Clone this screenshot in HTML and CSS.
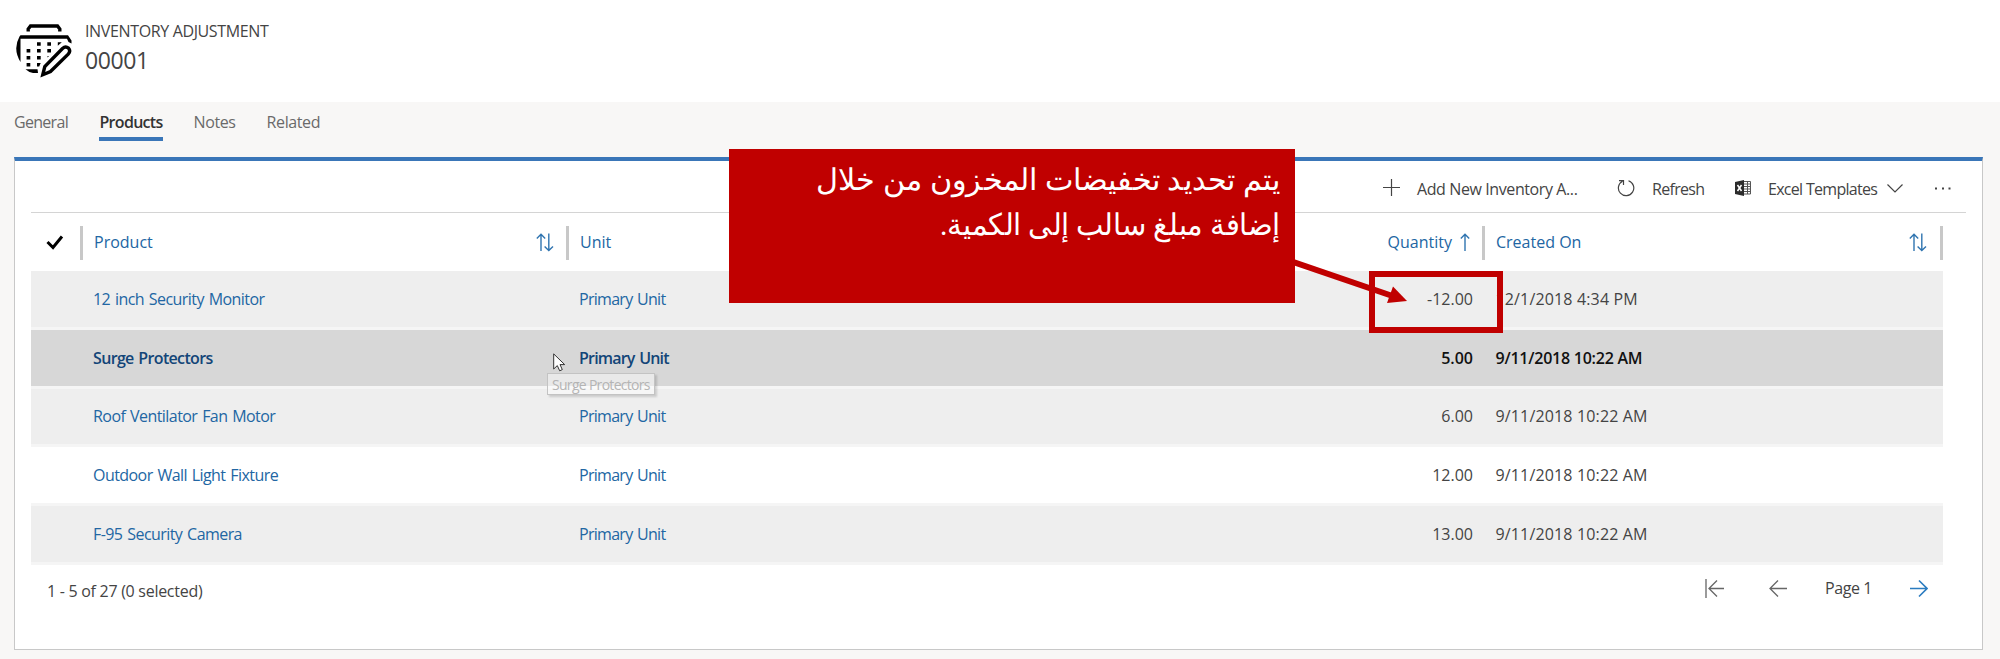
FILE: index.html
```
<!DOCTYPE html>
<html lang="en">
<head>
<meta charset="utf-8">
<title>Inventory Adjustment 00001</title>
<link rel="stylesheet" href="styles.css">
</head>
<body>
<header class="record-header">
  <svg class="record-icon" width="58" height="56" viewBox="0 0 58 56" fill="none">
    <path d="M13.200 9.500V7L15.500 4H42.500L44.800 7V9.500" stroke="#000" stroke-width="3.400"/>
    <path d="M5.500 13.200H53L56.500 18.500V21.500L53.500 20L52 16.800H5.500V40Q-2.500 27 4.500 14.500Z" fill="#000"/>
    <path d="M10.500 47.300H22.500L23 51H18Q14 50.500 10.500 47.300Z" fill="#000"/>
    <path d="M22 20.200h3.700v3.600h-3.700zM32.300 20.200h3.700v3.600h-3.700zM42.800 20.200h4l-4 3.600zM11.600 27h3.700v3.600h-3.700zM22 27h3.700v3.600h-3.700zM32.300 27h3.700v3.600h-3.700zM11.600 34h3.700v3.600h-3.700zM22 34h3.700v3.600h-3.700zM32.500 34h1.500l-1.500 1.500zM11.600 41h3.700v3.600h-3.700zM22 41h3.700l-1.500 3.600h-2.200z" fill="#000"/>
    <path d="M27.800 52.700L29.800 44.500L47.500 26.500Q50.500 23.800 53.500 26.200Q56 29 53.200 32.200L35.500 49.500Z" stroke="#000" stroke-width="3.400"/>
  </svg>
  <div class="record-titles">
    <div class="entity">INVENTORY ADJUSTMENT</div>
    <div class="record-name">00001</div>
  </div>
</header>
<nav class="tabs">
  <a class="tab t70">General</a>
  <a class="tab tab-active t70">Products</a>
  <a class="tab t40">Notes</a>
  <a class="tab t40">Related</a>
</nav>
<main class="card">
  <div class="commands">
    <div class="command add"><svg width="17" height="17" viewBox="0 0 17 17"><path d="M8.500 0V17M0 8.500H17" class="ink"/></svg><span class="label t40">Add New Inventory A...</span></div>
    <div class="command refresh"><svg width="18" height="18" viewBox="0 0 18 18"><path d="M5.500 2.200A7.700 7.700 0 1 0 11.500 1.700M2 1.600H6.500V6" class="ink"/></svg><span class="label t70">Refresh</span></div>
    <div class="command excel"><svg width="16" height="16" viewBox="0 0 16 16"><path d="M8 1.500H15.500V14H8M9 4H15M9 6.500H15M9 9H15M9 11.500H15M12.500 2V14" stroke="#555" stroke-width="1" fill="none"/><path d="M0 2L9 0V16L0 14Z" fill="#2b2b2b"/><path d="M2.500 5L6.500 11M6.500 5L2.500 11" stroke="#fff" stroke-width="1.500"/></svg><span class="label t70">Excel Templates</span><svg class="chevron" width="16" height="9" viewBox="0 0 16 9"><path d="M.5 .5L8 8L15.500 .5" class="ink"/></svg></div>
    <svg class="more" width="16" height="3" viewBox="0 0 16 3"><path d="M0 .5h2v2H0zM7 .5h2v2H7zM13.500 .5h2v2h-2z" fill="#444"/></svg>
  </div>
  <div class="grid">
    <div class="row head">
      <div class="select"><svg width="18" height="15" viewBox="0 0 18 15"><path d="M1.500 7L7 12.500L16 1.500" stroke="#000" stroke-width="3" fill="none"/></svg></div>
      <div class="cell"><span>Product</span><svg class="sort" width="18" height="19" viewBox="0 0 18 19"><path d="M5 18V1.500M.8 5.500L5 1.300L9.200 5.500M12.800 .5V17M8.600 13.500L12.800 17.500L17 13.500" class="sort-line"/></svg></div>
      <div class="cell"><span>Unit</span></div>
      <div class="cell quantity"><span>Quantity</span><svg class="asc" width="10" height="19" viewBox="0 0 10 19"><path d="M5 18V1.500M.8 5.500L5 1.300L9.200 5.500" class="sort-line"/></svg></div>
      <div class="cell last"><span>Created On</span><svg class="sort" width="18" height="19" viewBox="0 0 18 19"><path d="M5 18V1.500M.8 5.500L5 1.300L9.200 5.500M12.800 .5V17M8.600 13.500L12.800 17.500L17 13.500" class="sort-line"/></svg></div>
    </div>
    <div class="row shaded"><div class="select"></div><div class="cell link">12 inch Security Monitor</div><div class="cell link unit">Primary Unit</div><div class="cell quantity">-12.00</div><div class="cell date">12/1/2018 4:34 PM</div></div>
    <div class="row hovered"><div class="select"></div><div class="cell link">Surge Protectors</div><div class="cell link unit">Primary Unit</div><div class="cell quantity">5.00</div><div class="cell date">9/11/2018 10:22 AM</div></div>
    <div class="row shaded"><div class="select"></div><div class="cell link">Roof Ventilator Fan Motor</div><div class="cell link unit">Primary Unit</div><div class="cell quantity">6.00</div><div class="cell date">9/11/2018 10:22 AM</div></div>
    <div class="row"><div class="select"></div><div class="cell link">Outdoor Wall Light Fixture</div><div class="cell link unit">Primary Unit</div><div class="cell quantity">12.00</div><div class="cell date">9/11/2018 10:22 AM</div></div>
    <div class="row shaded"><div class="select"></div><div class="cell link">F-95 Security Camera</div><div class="cell link unit">Primary Unit</div><div class="cell quantity">13.00</div><div class="cell date">9/11/2018 10:22 AM</div></div>
  </div>
  <footer class="pager">
    <span class="count">1 - 5 of 27 (0 selected)</span>
    <svg class="first" width="19" height="19" viewBox="0 0 19 19"><path d="M1 0V19M19 9.500H4M12 1.500L4 9.500L12 17.500" class="nav-line"/></svg>
    <svg class="prev" width="18" height="19" viewBox="0 0 18 19"><path d="M18 9.500H1M9 1.500L1 9.500L9 17.500" class="nav-line"/></svg>
    <span class="page">Page 1</span>
    <svg class="next" width="18" height="19" viewBox="0 0 18 19"><path d="M0 9.500H17M9 1.500L17 9.500L9 17.500" class="nav-line active"/></svg>
  </footer>
</main>
<div class="tooltip">Surge Protectors</div>
<svg class="cursor" width="13" height="19" viewBox="0 0 13 19"><path d="M.7 .9V16L4.300 12.600L6.700 17.800L9.300 16.600L7 11.600H11.700Z" fill="#fff" stroke="#333"/></svg>
<div class="callout" dir="rtl" lang="ar"><div class="first-line">يتم تحديد تخفيضات المخزون من خلال</div><div class="second-line">إضافة مبلغ سالب إلى الكمية.</div></div>
<div class="highlight"></div>
<svg class="arrow" width="120" height="48" viewBox="0 0 120 48"><path d="M0 3.500L102 38.500" stroke="#c00000" stroke-width="6"/><path d="M101 28.500L115 43L95 45Z" fill="#c00000"/></svg>
</body>
</html>
```
FILE: styles.css
```
* { box-sizing: border-box; }
body { margin: 0; position: relative; width: 2000px; height: 659px; overflow: hidden; background: #f8f7f6; color: #444; font: 16px/22px "Open Sans", sans-serif; white-space: nowrap; }
svg { display: block; flex: none; }
.t40 { letter-spacing: -.4px; }
.t70 { letter-spacing: -.7px; }
.record-header { height: 102px; background: #fff; display: flex; padding: 22px 0 0 15px; gap: 12px; }
.entity { height: 19px; line-height: 19px; letter-spacing: -.36px; }
.record-name { margin-top: 4px; font-size: 23px; line-height: 30px; letter-spacing: -.4px; }
.tabs { display: flex; gap: 31.500px; height: 55px; padding: 9px 0 0 14px; color: #6a6a6a; }
.tab { display: block; height: 30px; }
.tab:nth-child(n+3) { margin-left: -.5px; }
.tab-active { color: #333; font-weight: 600; border-bottom: 4px solid #3a76b8; }
.card { margin-left: 14px; width: 1969px; height: 493px; background: #fff; border: 1px solid #c8c8c8; border-top: 4px solid #3a76b8; padding: 0 16px; }
.commands { display: flex; align-items: center; height: 52px; padding-top: 4px; border-bottom: 1px solid #d4d4d4; padding-left: 1352px; }
.command { display: flex; align-items: center; }
.command > svg { margin-top: -2px; }
.label { margin-left: 17px; }
.add { width: 234px; }
.refresh { width: 118px; }
.excel { width: 200px; }
.command .chevron { margin-left: 10px; margin-top: 0; }
.ink { stroke: #444; stroke-width: 1.200; fill: none; }
.grid { width: 1912px; }
.row { display: grid; grid-template-columns: 50px 486px 735px 181px 460px; height: 58.8px; align-items: center; border-bottom: 3px solid #f5f5f5; }
.head { height: 58px; border: 0; color: #2266a3; }
.select { padding-left: 15px; }
.cell { display: flex; align-items: center; padding-left: 12px; letter-spacing: -.56px; word-spacing: 1.200px; }
.head .cell { height: 34px; margin-top: 1px; margin-left: -1px; padding-right: 13px; padding-left: 11px; border-left: 3px solid #c8c8c8; letter-spacing: 0; word-spacing: 0; }
.head .cell span { margin-top: -2px; }
.head .last { border-right: 3px solid #c8c8c8; }
.cell.unit { letter-spacing: -.72px; }
.cell.quantity { justify-content: flex-end; padding-right: 10px; letter-spacing: 0; }
.head .cell.quantity { border: 0; padding-right: 13px; gap: 8px; }
.cell.date { padding-left: 12.500px; letter-spacing: .15px; word-spacing: 0; }
.shaded { background: #eee; }
.hovered { background: #d7d7d7; color: #111; font-weight: 600; }
.hovered .cell { letter-spacing: -.66px; }
.hovered .cell.unit { letter-spacing: -.8px; }
.hovered .cell.quantity { letter-spacing: 0; }
.hovered .cell.date { letter-spacing: -.24px; }
.link { color: #2266a3; }
.hovered .link { color: #124578; }
.sort { margin-left: auto; }
.sort-line { stroke: #2f74b0; stroke-width: 1.400; fill: none; }
.pager { display: flex; align-items: center; height: 47px; padding-left: 16px; }
.count { width: 1658px; letter-spacing: -.28px; padding-top: 5px; }
.prev { margin-left: 45px; }
.page { margin-left: 38px; width: 85px; letter-spacing: -.4px; }
.nav-line { stroke: #666; stroke-width: 1.300; fill: none; }
.nav-line.active { stroke: #2b7cc0; stroke-width: 1.600; }
.tooltip { position: absolute; left: 547px; top: 373px; width: 108px; height: 22px; padding-left: 4px; font-size: 14px; line-height: 21px; letter-spacing: -.7px; color: #b4b4b4; background: rgba(255,255,255,.45); border: 1px solid #c3c3c3; box-shadow: 2px 2px 2px rgba(0,0,0,.15); }
.cursor { position: absolute; left: 553px; top: 353px; }
.callout { position: absolute; left: 729px; top: 149px; width: 566px; height: 154px; background: #c00000; color: #fff; font: 30px/45px "Liberation Serif", "Times New Roman", serif; padding: 8px 15px; }
.first-line { transform: scaleX(1.010); transform-origin: right; }
.second-line { transform: scaleX(.970); transform-origin: right; }
.highlight { position: absolute; left: 1369px; top: 271px; width: 134px; height: 62px; border: 6px solid #c00000; }
.arrow { position: absolute; left: 1292px; top: 258px; }
```
